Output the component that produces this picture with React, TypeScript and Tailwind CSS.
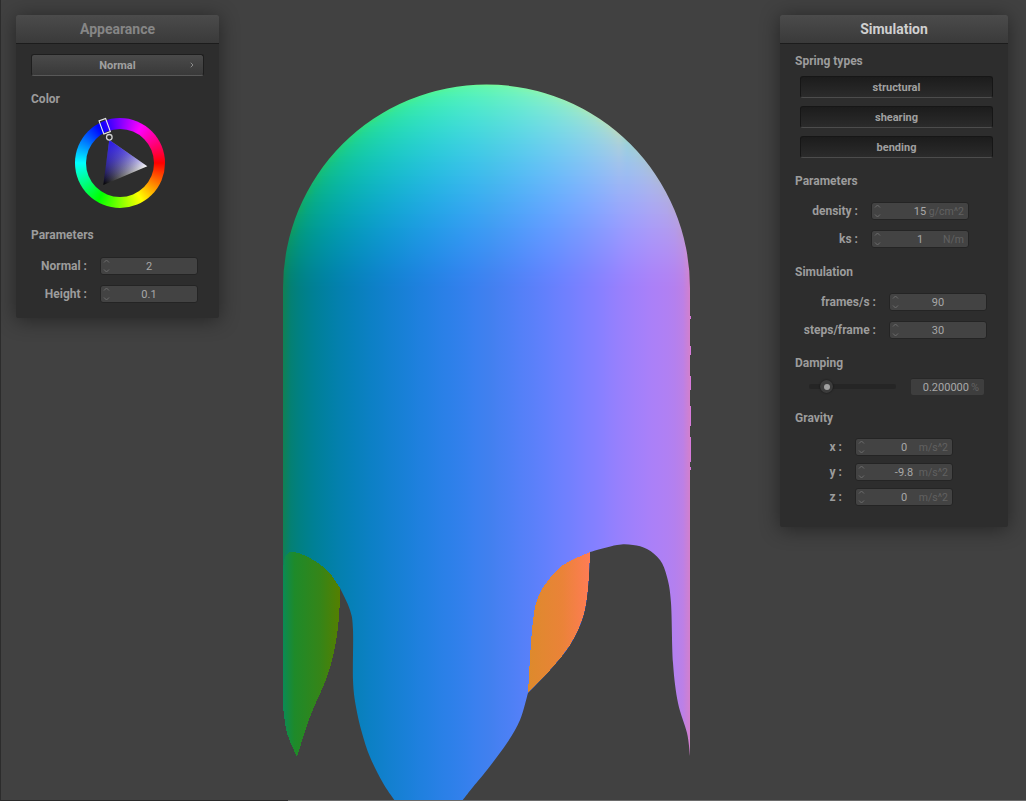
import React from "react";
import { ChevronRight } from "lucide-react";

// Normal-shaded cloth: colour = normal * 0.5 + 0.5, camera turned about 30deg
const turn = (-30 * Math.PI) / 180;

// the right rim stays flatter than a true cylinder
const capTable = [[620, 0.19], [650, 0.33], [672, 0.4], [682, 0.45], [690, 0.65], [692, 0.7]];
const rimCap = (x: number) => {
  if (x <= 620) return 1;
  for (let i = 0; i < capTable.length - 1; i++) {
    const [x0, c0] = capTable[i];
    const [x1, c1] = capTable[i + 1];
    if (x <= x1) return c0 + ((c1 - c0) * (x - x0)) / (x1 - x0);
  }
  return 0.7;
};

const shade = (x: number, y: number) => {
  const vx = Math.max(-1, Math.min(1, (x - 486.5) / 203.5));
  const vy = y < 288 ? (288 - y) / 204 : 0;
  const vz = Math.sqrt(Math.max(0, 1 - vx * vx - vy * vy));
  const zp = vz + 0.25 * vy;
  let nx = vx * Math.cos(turn) + zp * Math.sin(turn);
  let nz = zp * Math.cos(turn) - vx * Math.sin(turn);
  const ny = Math.pow(vy, 1.2) * 0.95;
  const cap = rimCap(x);
  if (nx > cap) {
    nz += (nx - cap) * 0.4;
    nx = cap;
  }
  nz += 0.15 * Math.sqrt(Math.max(0, -vx));
  const ch = (n: number) => Math.round(127.5 * (1 + Math.max(-1, Math.min(1, n))));
  return `rgb(${ch(nx)},${ch(ny)},${ch(nz)})`;
};

const rowYs: number[] = [];
for (let y = 84; y <= 288; y += 2) rowYs.push(y);
const stopXs: number[] = [];
for (let x = 283; x <= 691; x += 8) stopXs.push(x);

// Catmull-Rom through the traced outline points
const smooth = (pts: number[][]) => {
  let d = "";
  for (let i = 0; i < pts.length - 1; i++) {
    const p0 = pts[Math.max(i - 1, 0)];
    const p1 = pts[i];
    const p2 = pts[i + 1];
    const p3 = pts[Math.min(i + 2, pts.length - 1)];
    d += ` C${p1[0] + (p2[0] - p0[0]) / 6},${p1[1] + (p2[1] - p0[1]) / 6} ${p2[0] - (p3[0] - p1[0]) / 6},${p2[1] - (p3[1] - p1[1]) / 6} ${p2[0]},${p2[1]}`;
  }
  return d;
};

const rightFlap = [
  [690, 756], [687, 733], [678, 703], [673, 663], [671, 603], [667, 577], [660, 560],
  [647, 549], [633, 545], [617, 545], [590, 552],
];
const orangeLower = [[590, 552], [588, 587], [583, 617], [570, 645], [550, 670], [528, 693]];
const orangeUpper = [[528, 693], [532, 630], [537, 600], [547, 582], [563, 565], [590, 552]];
const middleTongue = [
  [528, 693], [520, 720], [507, 743], [487, 770], [473, 787], [462, 801],
];
const leftSide = [
  [395, 801], [383, 783], [370, 757], [362, 733], [356, 707], [353, 680], [353, 630], [350, 610], [340, 588],
];
const clothPath =
  "M283,288 A203.5,203.5 0 0 1 690,288 L690,756" +
  smooth(rightFlap) +
  smooth(orangeLower) +
  smooth(middleTongue) +
  " L395,801" +
  smooth(leftSide) +
  " L283,575 Z";
const greenPath =
  "M340,588" +
  smooth([[340, 588], [327, 570], [310, 558], [293, 552], [285, 557], [283, 573]]) +
  " L283,707" +
  smooth([[283, 707], [287, 733], [297, 757]]) +
  smooth([[297, 757], [310, 717], [327, 677], [335, 647], [339, 617], [340, 588]]) +
  " Z";
const orangePath = "M590,552" + smooth(orangeLower) + smooth(orangeUpper) + " Z";
const edgeTicks = [[316, 3], [346, 9], [376, 14], [406, 20], [437, 25], [467, 3]];
const leftMarks = [[118, 3, "#5a5a50"], [136, 3, "#3f5a70"], [171, 4, "#5f5243"], [197, 2, "#41416a"]] as const;

const Cloth = () => (
  <svg width="1026" height="800" viewBox="0 0 1026 800" className="block">
    <defs>
      {rowYs.map((y) => (
        <linearGradient key={y} id={`row${y}`} gradientUnits="userSpaceOnUse" x1="283" x2="691" y1="0" y2="0">
          {stopXs.map((x) => (
            <stop key={x} offset={(x - 283) / 408} stopColor={shade(x, y)} />
          ))}
        </linearGradient>
      ))}
      <linearGradient id="green" gradientUnits="userSpaceOnUse" x1="283" x2="340" y1="0" y2="0">
        <stop offset="0" stopColor="#0b8a55" />
        <stop offset="0.2" stopColor="#1e8a2a" />
        <stop offset="0.65" stopColor="#358518" />
        <stop offset="1" stopColor="#557f00" />
      </linearGradient>
      <linearGradient id="orange" gradientUnits="userSpaceOnUse" x1="528" x2="590" y1="0" y2="0">
        <stop offset="0" stopColor="#dd8a2c" />
        <stop offset="0.55" stopColor="#ea8338" />
        <stop offset="1" stopColor="#ff7c55" />
      </linearGradient>
      <clipPath id="clothClip">
        <path d={clothPath} />
      </clipPath>
    </defs>
    <g clipPath="url(#clothClip)" shapeRendering="crispEdges">
      {rowYs.map((y) => (
        <rect key={y} x="283" y={y} width="408" height="2" fill={`url(#row${y})`} />
      ))}
      <rect x="283" y="288" width="408" height="513" fill="url(#row288)" />
    </g>
    <path d={greenPath} fill="url(#green)" shapeRendering="crispEdges" />
    <path d={orangePath} fill="url(#orange)" shapeRendering="crispEdges" />
    {edgeTicks.map(([y, h]) => (
      <rect key={y} x="690" y={y} width="1" height={h} fill="#d67adc" />
    ))}
    {leftMarks.map(([y, h, c]) => (
      <rect key={y} x="0" y={y} width="1" height={h} fill={c} />
    ))}
  </svg>
);

const ColorWheel = () => (
  <div className="relative w-[90px] h-[90px] rounded-full bg-[conic-gradient(from_90deg,#ff0000,#ffff00,#00ff00,#00ffff,#0000ff,#ff00ff,#ff0000)]">
    <div className="absolute left-[11px] top-[11px] w-[68px] h-[68px] rounded-full bg-[#2d2d2d]" />
    <svg width="110" height="110" viewBox="0 0 110 110" className="absolute left-[-10px] top-[-20px]">
      <defs>
        <linearGradient id="greyRamp" gradientUnits="userSpaceOnUse" x1="38.3" y1="87" x2="82.3" y2="68.3">
          <stop offset="0" stopColor="#000000" />
          <stop offset="1" stopColor="#ffffff" />
        </linearGradient>
        <linearGradient id="hueRamp" gradientUnits="userSpaceOnUse" x1="44.3" y1="42" x2="59.6" y2="78">
          <stop offset="0" stopColor="#2a18ee" />
          <stop offset="0.5" stopColor="#2a18ee" stopOpacity="0.58" />
          <stop offset="1" stopColor="#2a18ee" stopOpacity="0" />
        </linearGradient>
      </defs>
      <polygon points="44.3,42 82.3,68.3 38.3,87" fill="url(#greyRamp)" />
      <polygon points="44.3,42 82.3,68.3 38.3,87" fill="url(#hueRamp)" />
      <circle cx="44.3" cy="39.3" r="2.8" fill="none" stroke="#d0d0d0" strokeWidth="1.3" />
      <rect x="36.2" y="21.3" width="7" height="14" fill="none" stroke="#e8e8e8" strokeWidth="1.1" transform="rotate(-20 39.7 28.3)" />
    </svg>
  </div>
);

const Spinner = () => (
  <svg width="7" height="14" viewBox="0 0 7 14" className="absolute left-[2px] top-[1px]">
    <polyline points="1,3.5 3.5,1 6,3.5" fill="none" stroke="#6c6c6c" strokeWidth="1" />
    <polyline points="1,10.5 3.5,13 6,10.5" fill="none" stroke="#6c6c6c" strokeWidth="1" />
  </svg>
);

const NumberBox = ({ value, unit }: { value: string; unit?: string }) => (
  <div className="relative w-[98px] h-[18px] pt-[2px] rounded-[3px] border border-[#242424] bg-[#434343] flex items-center justify-center text-[11px] text-[#a8a8a8]">
    <Spinner />
    <span>{value}</span>
    {unit && <span className="absolute right-[4px] text-[10.5px] text-[#616161]">{unit}</span>}
  </div>
);

const Row = ({ label, labelW, value, unit }: { label: string; labelW: string; value: string; unit?: string }) => (
  <div className="flex items-center gap-[13px]">
    <span className={`${labelW} text-right text-[12px] font-bold text-[#9c9c9c] whitespace-nowrap`}>{label}</span>
    <NumberBox value={value} unit={unit} />
  </div>
);

const SectionLabel = ({ children, className }: { children: React.ReactNode; className: string }) => (
  <div className={`h-[16px] leading-[16px] text-[12px] font-bold text-[#9c9c9c] ${className}`}>{children}</div>
);

const ToggleButton = ({ label }: { label: string }) => (
  <div className="w-[193px] h-[22px] pt-[2px] ml-[5px] rounded-[3px] border border-[#161616] border-b-[#4c4c4c] bg-gradient-to-b from-[#1c1c1c] to-[#2b2b2b] flex items-center justify-center text-[11px] font-bold text-[#a0a0a0]">
    {label}
  </div>
);

const PanelHeader = ({ title, color }: { title: string; color: string }) => (
  <div className={`h-[29px] border-b border-[#1c1c1c] bg-gradient-to-b from-[#4b4b4b] to-[#3a3a3a] rounded-t-[2px] flex items-center justify-center text-[14px] font-bold ${color}`}>
    {title}
  </div>
);

const panel = "absolute top-[15px] bg-[#2d2d2d] rounded-[2px] shadow-[0_2px_20px_rgba(0,0,0,0.45)]";

const App = () => (
  <div className="w-[1026px] h-[801px] flex flex-col bg-[#414141] overflow-hidden font-[Roboto,sans-serif] border-l border-[#2c2c2c]">
    <div className="relative flex-1 ml-[-1px]">
      <Cloth />

      {/* Appearance window */}
      <div className={`${panel} left-[16px] w-[203px] h-[303px]`}>
        <PanelHeader title="Appearance" color="text-[#868686]" />
        <div className="pl-[15px] flex flex-col">
          <div className="relative mt-[10px] w-[173px] h-[22px] pt-[2px] rounded-[3px] border border-[#1e1e1e] border-b-[#585858] bg-gradient-to-b from-[#4a4a4a] to-[#393939] flex items-center justify-center text-[11px] font-bold text-[#a0a0a0]">
            Normal
            <ChevronRight size={8} strokeWidth={2} className="absolute right-[7px] top-[6px] text-[#b0b0b0]" />
          </div>
          <SectionLabel className="mt-[15px]">Color</SectionLabel>
          <div className="mt-[11px] ml-[44px]">
            <ColorWheel />
          </div>
          <SectionLabel className="mt-[19px]">Parameters</SectionLabel>
          <div className="mt-[14px] flex flex-col gap-[10px]">
            <Row label="Normal :" labelW="w-[56px]" value="2" />
            <Row label="Height :" labelW="w-[56px]" value="0.1" />
          </div>
        </div>
      </div>

      {/* Simulation window */}
      <div className={`${panel} left-[780px] w-[228px] h-[512px]`}>
        <PanelHeader title="Simulation" color="text-[#d0d0d0]" />
        <div className="pl-[15px] flex flex-col">
          <SectionLabel className="mt-[9px]">Spring types</SectionLabel>
          <div className="mt-[7px] flex flex-col gap-[8px]">
            <ToggleButton label="structural" />
            <ToggleButton label="shearing" />
            <ToggleButton label="bending" />
          </div>
          <SectionLabel className="mt-[15px]">Parameters</SectionLabel>
          <div className="mt-[13px] flex flex-col gap-[10px]">
            <Row label="density :" labelW="w-[63px]" value="15" unit="g/cm^2" />
            <Row label="ks :" labelW="w-[63px]" value="1" unit="N/m" />
          </div>
          <SectionLabel className="mt-[16px]">Simulation</SectionLabel>
          <div className="mt-[13px] flex flex-col gap-[10px]">
            <Row label="frames/s :" labelW="w-[81px]" value="90" />
            <Row label="steps/frame :" labelW="w-[81px]" value="30" />
          </div>
          <SectionLabel className="mt-[16px]">Damping</SectionLabel>
          <div className="mt-[7px] flex items-center h-[17px]">
            <div className="relative ml-[14px] w-[87px] h-[5px] rounded-[2px] bg-[#252525]">
              <div className="absolute left-[11px] top-[-4px] w-[13px] h-[13px] rounded-full bg-[#3c3c3c] shadow-[0_0_2px_rgba(0,0,0,0.6)] flex items-center justify-center">
                <div className="w-[6px] h-[6px] rounded-full bg-[#a0a0a0]" />
              </div>
            </div>
            <div className="ml-[15px] w-[73px] h-[17px] pt-[2px] rounded-[2px] border-t border-[#272727] bg-[#3e3e3e] flex items-center justify-end pr-[5px] text-[11px] text-[#a8a8a8]">
              0.200000<span className="ml-[2px] text-[#616161]">%</span>
            </div>
          </div>
          <SectionLabel className="mt-[15px]">Gravity</SectionLabel>
          <div className="mt-[12px] flex flex-col gap-[7px]">
            <Row label="x :" labelW="w-[47px]" value="0" unit="m/s^2" />
            <Row label="y :" labelW="w-[47px]" value="-9.8" unit="m/s^2" />
            <Row label="z :" labelW="w-[47px]" value="0" unit="m/s^2" />
          </div>
        </div>
      </div>
    </div>
    <div className="h-px flex ml-[-1px]">
      <div className="w-[288px] bg-[#2a2a2a]" />
      <div className="flex-1 bg-[#6a6a6a]" />
    </div>
  </div>
);

export default App;
